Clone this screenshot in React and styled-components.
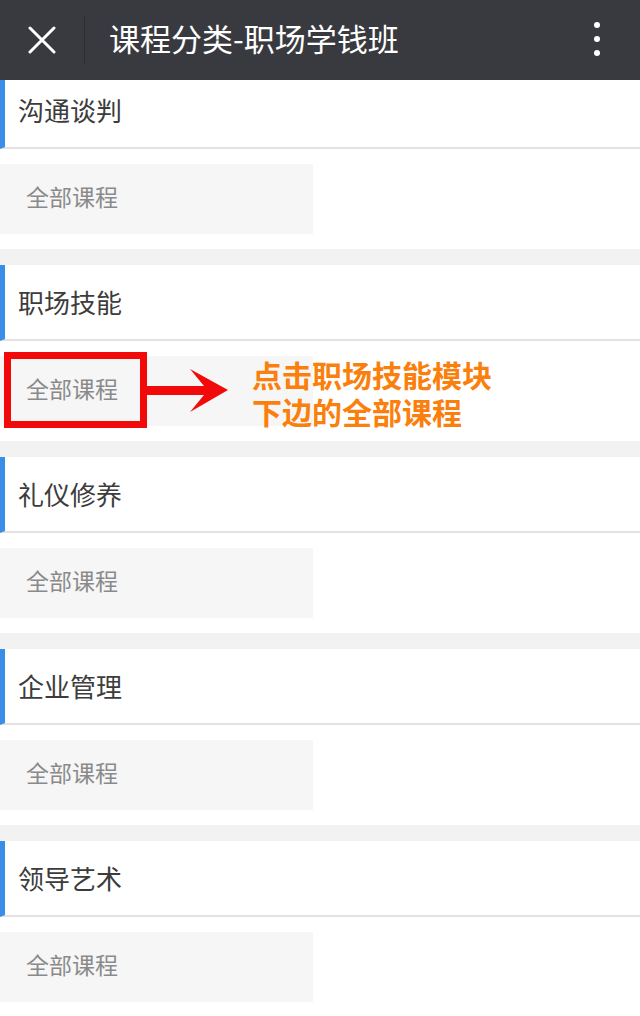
import React from "react";
import styled, { createGlobalStyle } from "styled-components";

const Global = createGlobalStyle`
  html, body {
    margin: 0;
    padding: 0;
    background: #ffffff;
    overflow: hidden;
  }
  body {
    font-family: "Noto Sans CJK SC", "Noto Sans", sans-serif;
  }
`;

const Page = styled.div`
  width: 640px;
  height: 1016px;
  display: flex;
  flex-direction: column;
  overflow: hidden;
`;

const TopBar = styled.div`
  position: relative;
  z-index: 2;
  height: 80px;
  flex: 0 0 80px;
  background: #393a3f;
  display: flex;
  align-items: center;
`;

const CloseBtn = styled.div`
  width: 84px;
  height: 80px;
  display: flex;
  align-items: center;
  justify-content: center;
`;

const Divider = styled.div`
  width: 1px;
  height: 48px;
  background: #2c2d31;
`;

const Title = styled.div`
  flex: 1;
  margin-left: 24px;
  color: #ffffff;
  font-size: 31px;
  line-height: 76px;
  padding-bottom: 4px;
  white-space: nowrap;
`;

const MoreBtn = styled.div`
  width: 86px;
  height: 80px;
  display: flex;
  flex-direction: column;
  align-items: center;
  justify-content: center;
  gap: 8px;
  padding-bottom: 2px;
  box-sizing: border-box;
`;

const Dot = styled.span`
  width: 6px;
  height: 6px;
  border-radius: 50%;
  background: #ffffff;
`;

const Scroller = styled.div`
  flex: 1;
  overflow: hidden;
`;

const List = styled.div`
  margin-top: -7px;
`;

const Section = styled.div`
  background: #ffffff;
`;

const Heading = styled.div`
  height: 76px;
  display: flex;
  align-items: center;
  border-left: 5px solid #3b8ee8;
  padding-left: 13px;
  padding-bottom: 2px;
  box-sizing: border-box;
  font-size: 26px;
  color: #3c3c3c;
  border-bottom: 2px solid #e2e2e2;
`;

const ItemRow = styled.div`
  position: relative;
  padding: 15px 0;
`;

const AllBox = styled.div`
  width: 313px;
  height: 70px;
  background: #f6f6f6;
  display: flex;
  align-items: center;
  padding-left: 26px;
  padding-bottom: 6px;
  box-sizing: border-box;
  font-size: 23px;
  color: #8a8a8a;
`;

const Gap = styled.div`
  height: 16px;
  background: #f2f2f2;
`;

const Highlight = styled.div`
  position: absolute;
  left: 4px;
  top: 11px;
  width: 143px;
  height: 76px;
  border: 7px solid #f20a0a;
  box-sizing: border-box;
`;

const Arrow = styled.svg`
  position: absolute;
  left: 146px;
  top: 27px;
`;

const Note = styled.div`
  position: absolute;
  left: 252px;
  top: 17px;
  color: #fb7f0c;
  font-family: "Liberation Sans", "Noto Sans CJK SC", sans-serif;
  font-weight: 700;
  font-size: 30px;
  white-space: nowrap;
`;

const NoteLine = styled.div`
  height: 37px;
  line-height: 37px;
`;

const sections = ["沟通谈判", "职场技能", "礼仪修养", "企业管理", "领导艺术"];

export default function App() {
  return (
    <Page>
      <Global />
      <TopBar>
        <CloseBtn>
          <svg width="28" height="28" viewBox="0 0 28 28">
            <path d="M2 2 L26 26 M26 2 L2 26" stroke="#ffffff" strokeWidth="3" strokeLinecap="round" />
          </svg>
        </CloseBtn>
        <Divider />
        <Title>课程分类-职场学钱班</Title>
        <MoreBtn>
          <Dot />
          <Dot />
          <Dot />
        </MoreBtn>
      </TopBar>
      <Scroller>
        <List>
          {sections.map((name, i) => (
            <Section key={name}>
              <Heading>{name}</Heading>
              <ItemRow>
                <AllBox>全部课程</AllBox>
                {i === 1 && (
                  <>
                    <Highlight />
                    <Arrow width="84" height="46" viewBox="0 0 84 46">
                      <path d="M0 18 L58 18 L44 1 L82 22 L44 44 L58 27 L0 27 Z" fill="#f20a0a" />
                    </Arrow>
                    <Note>
                      <NoteLine>点击职场技能模块</NoteLine>
                      <NoteLine>下边的全部课程</NoteLine>
                    </Note>
                  </>
                )}
              </ItemRow>
              <Gap />
            </Section>
          ))}
        </List>
      </Scroller>
    </Page>
  );
}
